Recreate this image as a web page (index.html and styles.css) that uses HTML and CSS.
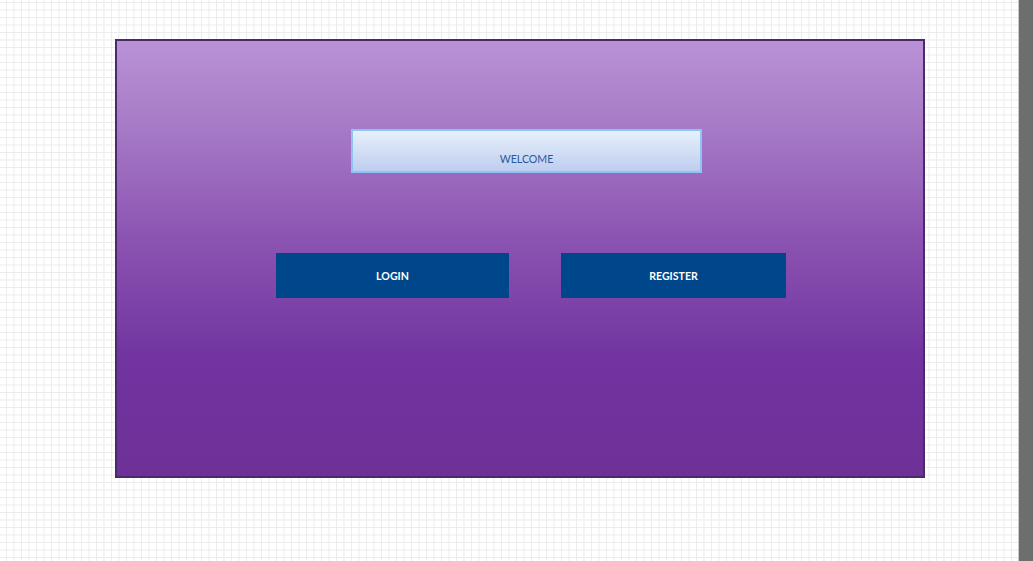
FILE: index.html
```html
<!DOCTYPE html>
<html>
<head>
<meta charset="utf-8">
<link rel="stylesheet" href="styles.css">
</head>
<body>
<div class="app">
  <div class="canvas">
    <div class="panel">
      <div class="welcome">WELCOME</div>
      <div class="actions">
        <div class="btn btn-login">LOGIN</div>
        <div class="btn btn-register">REGISTER</div>
      </div>
    </div>
  </div>
  <div class="scrollbar"></div>
</div>
</body>
</html>
```
FILE: styles.css
```css
html, body {
  margin: 0;
  padding: 0;
  width: 1033px;
  height: 561px;
  overflow: hidden;
}
body {
  font-family: Lato, "Open Sans", sans-serif;
}
.app {
  display: flex;
  width: 1033px;
  height: 561px;
}
.canvas {
  flex: 1;
  background-color: #ffffff;
  background-image:
    linear-gradient(to right, #ebebeb 1px, transparent 1px),
    linear-gradient(to bottom, #ebebeb 1px, transparent 1px);
  background-size: 7.5px 7.5px;
  background-position: 6px 2px;
  padding-top: 39px;
  padding-left: 115px;
  box-sizing: border-box;
}
.scrollbar {
  width: 14px;
  background: #6e6e6e;
  border-left: 1px solid #c9c9c9;
}
.panel {
  width: 810px;
  height: 439px;
  box-sizing: border-box;
  border: 2px solid #4b2a6b;
  background: linear-gradient(to bottom, #b992d6 0%, #a67ac6 20%, #8c54b2 45%, #7134a0 73%, #6e3198 100%);
  display: flex;
  flex-direction: column;
}
.welcome {
  margin-top: 88px;
  margin-left: 234px;
  width: 351px;
  height: 44px;
  box-sizing: border-box;
  border: 2px solid #8ec3f6;
  background: linear-gradient(to bottom, #e5f1fa 0%, #bfcdf0 100%);
  color: #285999;
  font-size: 10.6px;
  text-align: center;
  padding-top: 22px;
  line-height: 13px;
}
.actions {
  display: flex;
  gap: 52px;
  margin-top: 80px;
  margin-left: 159px;
}
.btn {
  height: 45px;
  background: #00468a;
  color: #ffffff;
  font-size: 10.6px;
  font-weight: 700;
  display: flex;
  align-items: center;
  justify-content: center;
}
.btn-login {
  width: 233px;
}
.btn-register {
  width: 225px;
}
```
